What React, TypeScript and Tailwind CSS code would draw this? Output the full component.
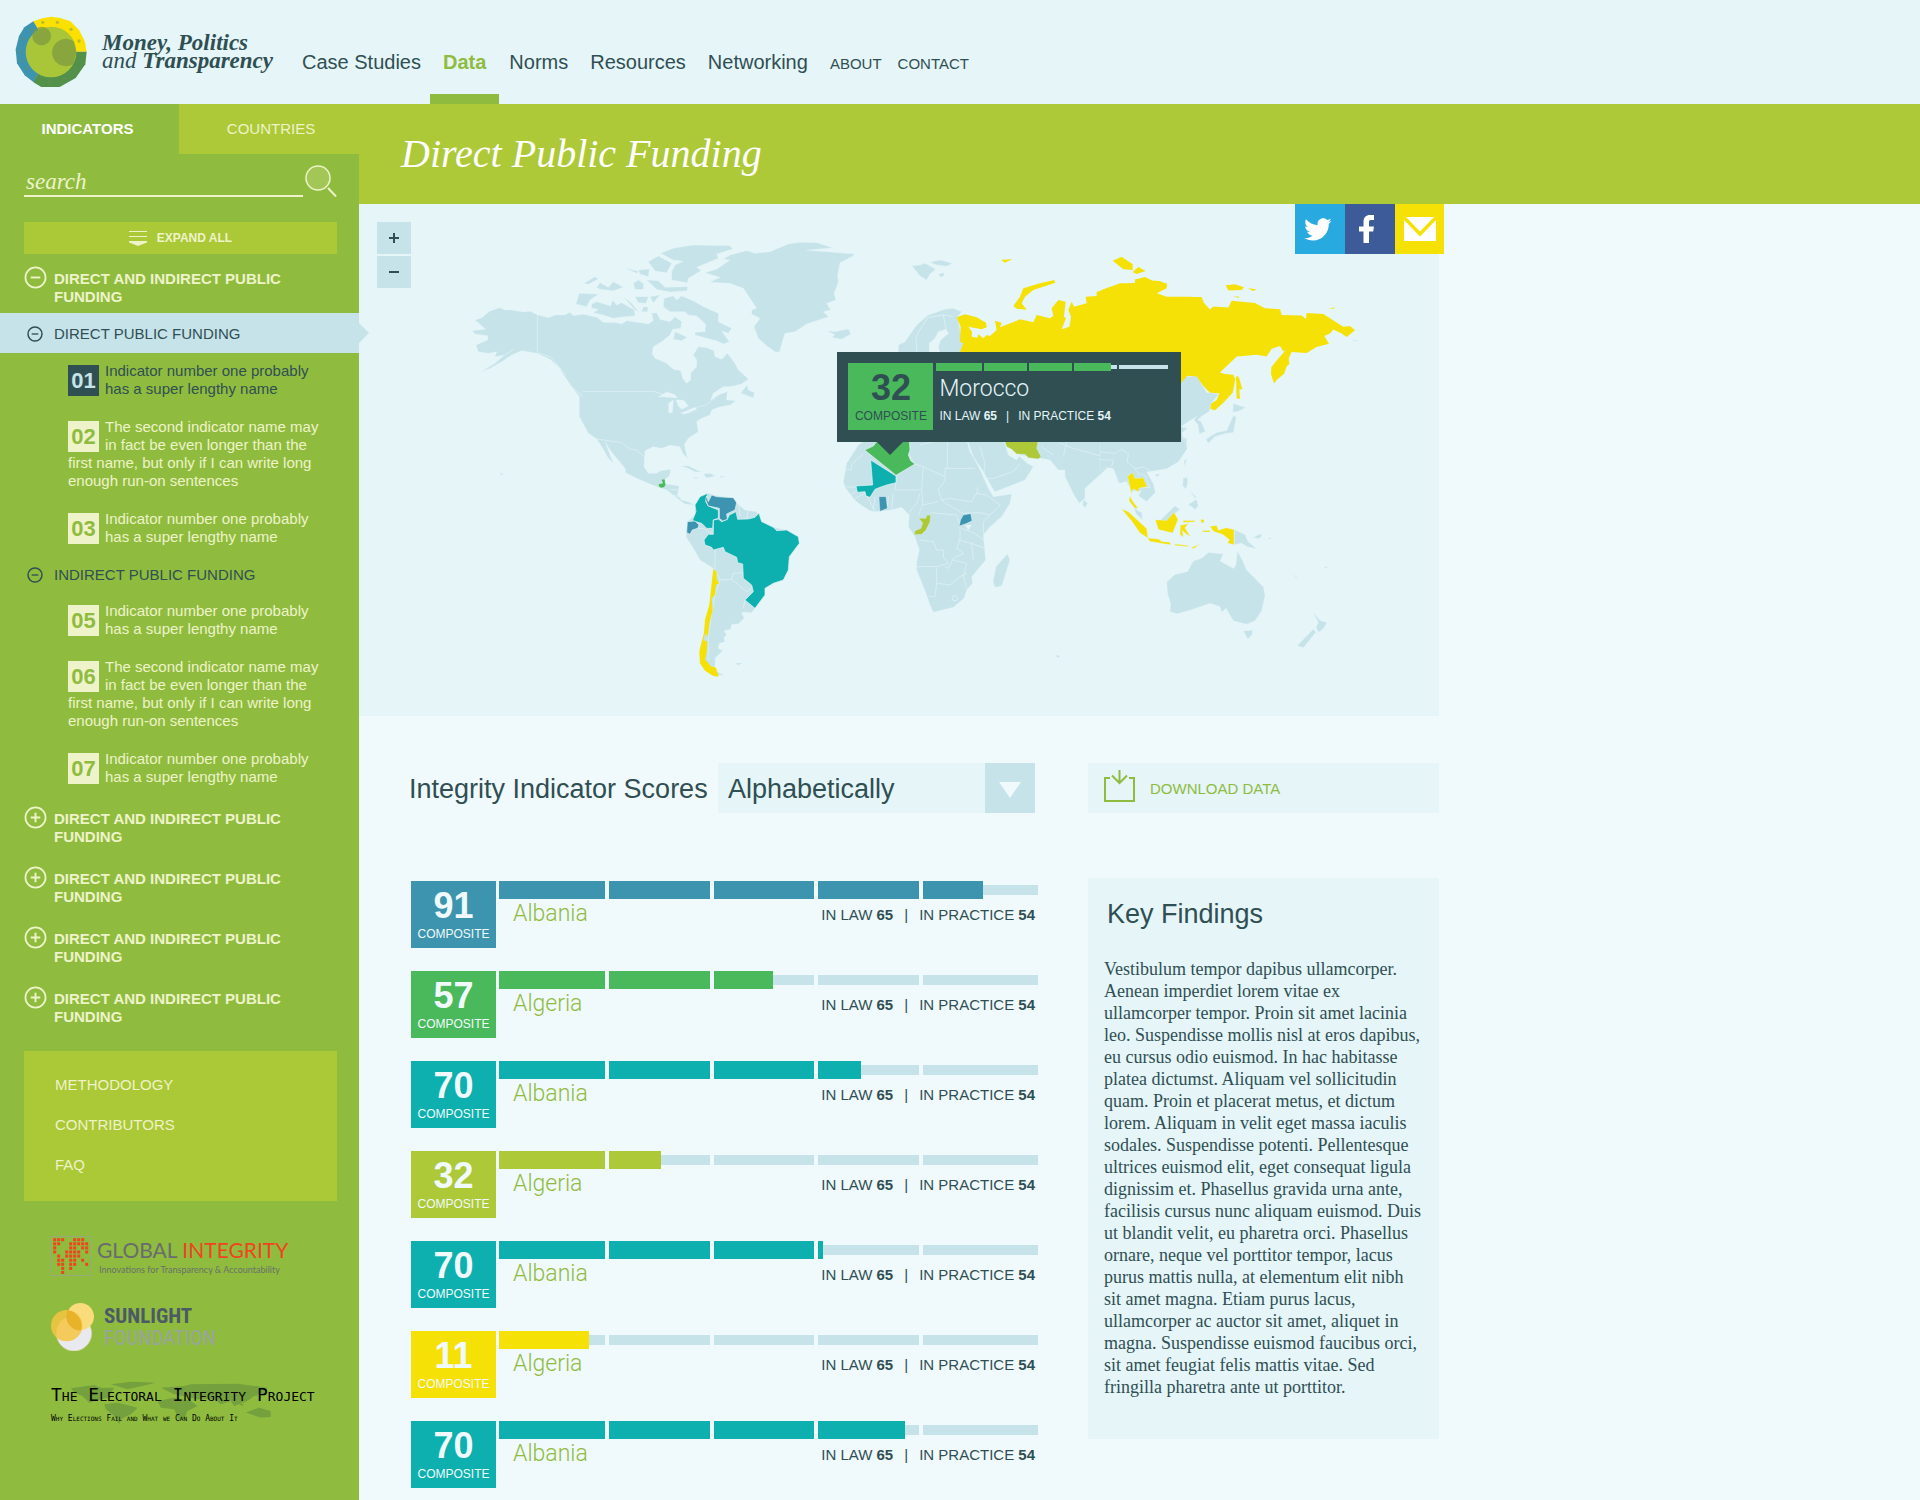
import { useState } from "react";

const SANS = "font-['Liberation_Sans',Arial,sans-serif]";
const SERIF = "font-['Liberation_Serif',Georgia,serif]";

const scores = [
  { score: 91, name: "Albania", fill: 484, color: "bg-[#3c94ae]" },
  { score: 57, name: "Algeria", fill: 274, color: "bg-[#4ab95b]" },
  { score: 70, name: "Albania", fill: 362, color: "bg-[#0db0ae]" },
  { score: 32, name: "Algeria", fill: 162, color: "bg-[#adc938]" },
  { score: 70, name: "Albania", fill: 324, color: "bg-[#0db0ae]" },
  { score: 11, name: "Algeria", fill: 90, color: "bg-[#f6e106]" },
  { score: 70, name: "Albania", fill: 406, color: "bg-[#0db0ae]" },
];

const barSegments = [
  { start: 0, size: 106 },
  { start: 110, size: 101 },
  { start: 215, size: 100 },
  { start: 319, size: 101 },
  { start: 424, size: 115 },
];

const tipSegments = [
  { start: 0, size: 46 },
  { start: 48, size: 43 },
  { start: 93, size: 43 },
  { start: 138, size: 43 },
  { start: 183, size: 49 },
];

const navLinks = ["Case Studies", "Data", "Norms", "Resources", "Networking"];

const shortName = "Indicator number one probably has a super lengthy name";
const longName =
  "The second indicator name may in fact be even longer than the first name, but only if I can write long enough run-on sentences";

const findings = [
  "Vestibulum tempor dapibus ullamcorper.",
  "Aenean imperdiet lorem vitae ex",
  "ullamcorper tempor. Proin sit amet lacinia",
  "leo. Suspendisse mollis nisl at eros dapibus,",
  "eu cursus odio euismod. In hac habitasse",
  "platea dictumst. Aliquam vel sollicitudin",
  "quam. Proin et placerat metus, et dictum",
  "lorem. Aliquam in velit eget massa iaculis",
  "sodales. Suspendisse potenti. Pellentesque",
  "ultrices euismod elit, eget consequat ligula",
  "dignissim et. Phasellus gravida urna ante,",
  "facilisis cursus nunc aliquam euismod. Duis",
  "ut blandit velit, eu pharetra orci. Phasellus",
  "ornare, neque vel porttitor tempor, lacus",
  "purus mattis nulla, at elementum elit nibh",
  "sit amet magna. Etiam purus lacus,",
  "ullamcorper ac auctor sit amet, aliquet in",
  "magna. Suspendisse euismod faucibus orci,",
  "sit amet feugiat felis mattis vitae. Sed",
  "fringilla pharetra ante ut porttitor.",
];

function Logo() {
  const dots = [
    [129, 69], [173, 69], [214, 90], [238, 125], [228, 209], [196, 236], [152, 247], [110, 233],
    [81, 208], [66, 183], [62, 157], [68, 118], [95, 90],
  ];
  return (
    <svg viewBox="46 50 216 216" className="size-[72px] shrink-0" aria-hidden="true">
      <path fill="#fce000" d="M101 66L128 57 155 52 182 56 212 66 238 92 255 125 261 157H155Z" />
      <path fill="#53914a" d="M261 157L257 195 228 236 180 263H125L100 248 155 157Z" />
      <path fill="#3c94b0" d="M101 248L75 228 52 192 48 150 58 110 74 84 101 66 155 157Z" />
      {dots.map(([x, y]) => (
        <circle key={`${x}-${y}`} cx={x} cy={y} r="5" fill="#6d8e5d" opacity=".45" />
      ))}
      <circle cx="154" cy="158" r="76" fill="#a8c638" />
      <circle cx="126" cy="110" r="28" fill="#7f9b40" opacity=".75" />
      <path fill="#7f9b40" opacity=".75" d="M222 126A41 41 0 1 0 222 193L230 157Z" />
    </svg>
  );
}

function Toggle({ open, small }: { open: boolean; small?: boolean }) {
  return (
    <svg viewBox="0 0 24 24" className={small ? "size-4" : "size-[23px]"} fill="none" stroke="currentColor" aria-hidden="true">
      <circle cx="12" cy="12" r="10.5" strokeWidth={small ? 2.2 : 1.8} />
      <path strokeWidth="2" d={open ? "M7 12H17" : "M7 12H17M12 7V17"} />
    </svg>
  );
}

function Category({ open = false }: { open?: boolean }) {
  return (
    <button type="button" aria-expanded={open} className="flex w-full gap-[7px] pr-8 pl-6 text-left text-[15px] leading-[18px] font-bold text-[#eef3c9]">
      <span className="-mt-1 shrink-0">
        <Toggle open={open} />
      </span>
      DIRECT AND INDIRECT PUBLIC FUNDING
    </button>
  );
}

function Indicators({ items, active }: { items: { id: string; name: string }[]; active?: string }) {
  return (
    <ul className="flex flex-col gap-5 pr-[34px] pl-[68px] text-[15px] leading-[18px]">
      {items.map((item) => (
        <li key={item.id} className={item.id === active ? "text-[#2f4f53]" : "text-[#eef3c9]"}>
          <a href={`#indicator-${item.id}`} className="block">
            <span
              className={`float-left mt-[3px] mr-[6px] flex h-[31px] w-[31px] items-center justify-center text-[22px] font-bold ${
                item.id === active ? "bg-[#2f4f53] text-[#c6e3e9]" : "bg-[#eef3c9] text-[#8fbc3f]"
              }`}
            >
              {item.id}
            </span>
            {item.name}
          </a>
        </li>
      ))}
    </ul>
  );
}

function GlobalIntegrity() {
  const rows = ["111..111.", "11..11111", "1...11.11", "1..1111.1", ".1.1111..", ".11.11.1.", ".11.11..1", "..1.1....", "..1......"];
  return (
    <a href="#global-integrity" className="flex items-start gap-[6px]">
      <svg viewBox="0 0 40 40" className="mt-[1px] size-10 shrink-0" aria-hidden="true">
        <rect x=".5" y=".5" width="39" height="39" fill="none" stroke="#9aa68a" strokeWidth=".8" />
        {rows.map((row, y) =>
          row.split("").map((c, x) =>
            c === "1" ? <rect key={`${x}-${y}`} x={2.2 + x * 4} y={2.2 + y * 4.1} width="3" height="3" fill="#f0431f" /> : null,
          ),
        )}
      </svg>
      <span className="font-['Lato',sans-serif]">
        <span className="block text-[21px] leading-[30px] whitespace-nowrap text-[#6a6b6e]">
          GLOBAL <span className="text-[#f0431f]">INTEGRITY</span>
        </span>
        <span className="block pl-0.5 text-[9px] leading-[10px] whitespace-nowrap text-[#6a7069]">
          Innovations for Transparency &amp; Accountability
        </span>
      </span>
    </a>
  );
}

function Sunlight() {
  return (
    <a href="#sunlight" className="flex items-center gap-[10px]">
      <svg viewBox="0 0 129 144" className="h-12 w-[43px] shrink-0" aria-hidden="true">
        <circle cx="69" cy="91" r="53" fill="#e9eaef" stroke="#d9cf9a" strokeWidth="2" />
        <circle cx="88" cy="41" r="41" fill="#fbdc7c" />
        <circle cx="47" cy="68" r="47" fill="#f7c443" opacity=".85" />
        <path fill="#dfa91c" opacity=".7" d="M48 28A41 41 0 0 0 90 82A47 47 0 0 0 48 22Z" />
      </svg>
      <span className="font-['Liberation_Sans_Narrow','Roboto_Condensed','Liberation_Sans',sans-serif] text-[21px] leading-[22px]">
        <span className="block font-bold text-[#4b5a66]">SUNLIGHT</span>
        <span className="block text-[#99a39d]">FOUNDATION</span>
      </span>
    </a>
  );
}

function ElectoralProject() {
  return (
    <a href="#electoral-integrity" className="relative block font-['DejaVu_Sans_Mono',monospace] whitespace-nowrap text-black [font-variant-caps:small-caps]">
      <svg viewBox="0 0 760 135" className="absolute top-0 left-0 w-[253px]" fill="#74a03d" aria-hidden="true">
        <path d="M60 22L130 12 150 20 190 20 170 50 130 60 115 65 95 45 70 35ZM180 10L240 2 315 5 260 18 230 25ZM160 70L200 65 260 80 240 100 210 115 205 130 190 105 165 85ZM330 20L400 15 420 10 560 8 650 20 640 40 610 45 590 60 550 75 540 60 510 70 490 55 440 55 370 40ZM320 60L370 50 420 60 440 75 410 90 400 115 385 118 370 85 330 80ZM585 95L625 80 660 90 660 108 630 110ZM560 65L580 70 575 75Z" />
      </svg>
      <span className="relative block text-[18px] leading-[28px]">The Electoral Integrity Project</span>
      <span className="relative block pt-1 text-[8px] leading-[12px]">Why Elections Fail and What we Can Do About It</span>
    </a>
  );
}

function Sidebar() {
  return (
    <aside className="flex w-[359px] shrink-0 flex-col bg-[#8fbc3f]">
      <div role="tablist" className="flex h-[50px] text-[15px]">
        <button type="button" role="tab" aria-selected="true" className="w-[179px] pr-1 font-bold text-white">
          INDICATORS
        </button>
        <button type="button" role="tab" aria-selected="false" className="flex-1 bg-[#adc938] pl-1 text-[#eef3c9]">
          COUNTRIES
        </button>
      </div>

      <form className="flex items-end gap-[2px] pt-[11px] pr-[22px] pl-6" onSubmit={(e) => e.preventDefault()}>
        <input
          type="text"
          aria-label="search"
          placeholder="search"
          className={`h-8 min-w-0 flex-1 border-b-2 border-[#eef3c9] pt-1 pl-[2px] ${SERIF} text-[23px] text-[#eef3c9] italic outline-none placeholder:text-[#eef3c9]`}
        />
        <button type="submit" aria-label="Search">
          <svg viewBox="0 0 32 32" className="size-8" fill="none" stroke="#eef3c9" aria-hidden="true">
            <circle cx="13" cy="13" r="12" strokeWidth="1.5" fill="#a2c757" />
            <path d="M23 23L31 31.500" strokeWidth="2" />
          </svg>
        </button>
      </form>

      <div className="pt-[25px] pr-[22px] pl-6">
        <button type="button" className="flex h-8 w-full items-center justify-center gap-[10px] bg-[#abc837] text-xs font-bold text-[#eef3c9]">
          <svg viewBox="0 0 18 15" className="h-[15px] w-[18px]" aria-hidden="true">
            <path stroke="#eef3c9" d="M0 .5H18M0 5.500H18" />
            <path fill="#eef3c9" d="M0 10H18V11.500L9 15 0 11.500Z" />
          </svg>
          EXPAND ALL
        </button>
      </div>

      <div className="pt-4">
        <Category open />
      </div>

      <div className="relative mt-[7px] flex h-10 items-center bg-[#c6e3e9] pt-[2px] pl-[27px] text-[15px] text-[#2f4f53]">
        <button type="button" aria-expanded="true" className="flex items-center gap-[11px]">
          <Toggle open small />
          DIRECT PUBLIC FUNDING
        </button>
        <svg viewBox="0 0 11 22" className="absolute top-[9px] -right-[10px] z-10 h-[22px] w-[11px]" fill="#c6e3e9" aria-hidden="true">
          <path d="M0 0L11 11 0 22Z" />
        </svg>
      </div>

      <div className="pt-[9px]">
        <Indicators
          active="01"
          items={[
            { id: "01", name: shortName },
            { id: "02", name: longName },
            { id: "03", name: shortName },
          ]}
        />
      </div>
      <button type="button" aria-expanded="true" className="mt-2 flex h-10 items-center gap-[11px] pt-[2px] pl-[27px] text-[15px] text-[#2f4f53]">
        <Toggle open small />
        INDIRECT PUBLIC FUNDING
      </button>
      <div className="pt-2">
        <Indicators
          items={[
            { id: "05", name: shortName },
            { id: "06", name: longName },
            { id: "07", name: shortName },
          ]}
        />
      </div>

      <div className="flex flex-col gap-6 pt-6">
        <Category />
        <Category />
        <Category />
        <Category />
      </div>

      <nav className="mt-[25px] mr-[22px] ml-6 flex h-[150px] flex-col bg-[#abc837] pt-[14px] pl-[31px] text-[15px] leading-[40px] text-[#eef3c9]">
        <a href="#methodology">METHODOLOGY</a>
        <a href="#contributors">CONTRIBUTORS</a>
        <a href="#faq">FAQ</a>
      </nav>

      <div className="flex flex-col pt-[34px] pb-16 pl-[51px]">
        <GlobalIntegrity />
        <div className="pt-[27px]">
          <Sunlight />
        </div>
        <div className="pt-[30px]">
          <ElectoralProject />
        </div>
      </div>
    </aside>
  );
}

function WorldMap() {
  return (
    <svg viewBox="359 204 1080 512" className="block w-full" role="img" aria-label="World map of composite scores">
      {/* Americas */}
      <g transform="translate(440 200) scale(.33333)" fill="#c6e3e9" stroke="#e5f5f8" strokeWidth="1" strokeLinejoin="round">
        <path d="M180 323L195 330 215 330 250 336 270 334 292 344 325 353 345 345 375 345 390 337 400 347 430 343 470 352 490 367 530 368 545 372 560 362 600 368 625 372 640 362 635 340 650 338 660 358 690 365 705 350 725 365 722 385 698 388 690 405 665 425 640 440 636 460 645 475 680 490 700 508 722 512 728 535 740 550 752 540 752 520 770 500 770 480 760 465 775 440 800 443 822 452 825 470 845 478 862 460 885 490 895 510 925 537 905 552 870 560 850 560 820 580 812 600 840 583 862 575 860 600 888 602 870 615 835 622 815 630 810 645 785 655 770 665 775 695 745 715 733 733 742 775 728 760 720 740 690 736 665 745 640 740 615 752 612 800 625 820 650 820 662 812 692 808 688 828 675 838 678 852 718 858 712 885 725 900 745 905 765 915 735 912 712 895 680 870 655 862 625 850 590 835 557 818 555 805 530 775 510 750 495 725 520 790 505 775 488 745 470 717 445 700 418 650 418 590 395 560 375 530 355 500 330 478 290 460 245 452 215 465 185 485 150 505 120 518 165 490 190 468 222 446 195 465 165 470 170 455 145 460 115 455 108 435 143 420 143 407 105 402 97 392 137 388 105 360 125 353 150 333Z" />
        <path d="M672 295L700 288 710 300 725 288 765 305 790 320 835 340 835 365 875 385 865 400 845 393 868 425 850 432 830 422 800 415 765 405 765 397 795 395 797 372 770 348 745 345 735 335 690 335 670 320ZM455 312L470 305 512 318 518 300 530 315 545 308 583 330 585 348 550 350 520 355 490 345 460 338 475 328 455 325ZM418 280L475 283 450 300 440 320 408 312ZM662 160L700 145 760 135 870 137 878 147 830 162 835 175 770 202 783 212 745 235 742 248 695 240 695 215 705 195 730 184 700 180ZM625 185L655 168 695 190 680 218 645 213ZM470 262L480 248 505 262 520 245 550 262 520 272 480 268ZM432 250L465 230 475 237 445 253ZM558 205L595 214 590 220ZM595 210L628 207 625 230 600 222ZM580 250L595 240 610 250 610 268 585 268ZM620 240L655 242 675 262 742 260 742 272 690 276 650 268ZM550 290L575 310 595 335 585 330ZM585 290L625 290 618 310 595 308ZM630 290L660 285 640 308ZM610 320L625 322 622 335 605 335ZM705 395L742 412 725 422 700 418Z" />
        <path d="M795 218L830 208 870 180 850 178 870 165 920 152 945 160 990 155 1045 132 1080 127 1130 128 1178 143 1100 151 1180 157 1243 162 1235 170 1200 188 1193 225 1195 245 1190 260 1182 280 1188 300 1160 310 1172 330 1150 335 1165 350 1100 372 1065 395 1035 400 1018 457 1005 455 980 437 955 415 942 380 960 355 935 342 935 330 950 325 930 295 910 265 870 250 810 247 840 232ZM1160 392L1185 395 1225 387 1233 402 1205 418 1175 412 1185 404ZM903 580L920 555 925 570 943 578 940 594 925 588ZM722 798L745 797 785 817 765 815 740 803ZM790 822L810 820 826 828 800 834ZM760 832h14v3h-14zM840 829h12v3h-12zM180 820h8v4h-8zM885 1390L908 1388 895 1396ZM825 1413L852 1424 835 1426Z" />
        <path d="M765 915L780 890 805 880 830 887 880 893 890 910 915 930 950 935 965 965 1000 982 1040 990 1075 1010 1078 1030 1048 1070 1045 1110 1030 1140 1000 1150 975 1165 975 1185 945 1225 935 1238 905 1237 912 1255 895 1272 875 1273 872 1288 852 1292 860 1305 852 1312 854 1326 838 1330 835 1345 848 1352 825 1375 825 1400 805 1405 785 1395 780 1345 800 1270 815 1170 820 1105 780 1080 760 1045 738 1010 742 965 765 945Z" />
        <g fill="#e5f5f8">
          <path d="M655 590L680 576 705 584 712 594 690 592ZM686 610L700 600 697 638 686 638ZM708 600L730 600 745 618 725 628 715 618ZM722 640L765 622 770 628 735 642Z" />
        </g>
        <path fill="none" strokeWidth="1.800" d="M292 344V458L330 470 352 495 378 525M428 574H640L665 582M745 640L770 622 800 614 828 592M390 556L430 590M470 717L545 728 570 748 590 750 612 770M825 1050V1105L840 1140 875 1138 880 1120 908 1118M875 1138L920 1175 940 1160M840 1140L825 1185 815 1240 805 1310 805 1380M897 915L900 950M925 930L920 955M915 1200L910 1225M755 985L790 985 820 1003M688 868L715 870M700 885L715 890" />
        <path fill="#4ab95b" d="M664 838H675V850L678 852 673 862 663 864 655 858 657 851 668 850Z" />
        <path fill="#0db0ae" strokeWidth="2" d="M765 915L780 890 803 880 797 905 805 918 835 930 835 955 820 960 818 985 800 985 785 970 757 962 768 935ZM820 960L835 957 845 965 862 958 868 945 888 935 893 958 925 957 945 952 957 940 965 965 1000 982 1010 992 1040 990 1075 1010 1078 1030 1048 1070 1045 1110 1030 1140 1000 1150 975 1165 975 1185 945 1225 915 1200 940 1175 935 1155 910 1135 908 1092 893 1088 890 1072 855 1055 850 1042 820 1050 815 1042 795 1035 792 1020 805 1003 820 1003Z" />
        <path fill="#3c94b0" strokeWidth="2" d="M800 888L805 905 815 885 830 890 880 893 890 908 885 930 860 942 862 958 848 963 838 955 838 925 805 918 797 900ZM742 965L765 963 777 975 773 985 757 990 750 1003 740 998Z" />
        <path fill="#f6e106" stroke="none" d="M820 1107L830 1115 830 1140 838 1148 828 1155 825 1185 815 1195 818 1230 808 1270 803 1310 796 1300 790 1320 802 1325 800 1360 795 1378 812 1398 828 1403 836 1430 820 1428 795 1412 780 1390 778 1355 785 1325 792 1300 795 1260 808 1215 815 1150Z" />
      </g>
      {/* Europe, Africa and western Asia */}
      <g transform="translate(820 200) scale(.33333)" fill="#c6e3e9" stroke="#e5f5f8" strokeWidth="1" strokeLinejoin="round">
        <path d="M276 197L300 195 315 190 347 208 330 222 320 240 300 228ZM330 187L360 180 397 190 380 199 350 195ZM356 222L370 218 374 226 362 232Z" />
        <path d="M235 460V435L255 425 290 375 325 345 375 328 400 325 425 335 412 350 422 400 445 460Z" />
        <path fill="#e5f5f8" d="M328 460L328 430 345 415 355 395 378 388 386 400 362 420 355 440 360 460Z" />
        <path fill="none" strokeWidth="2" d="M290 456L288 410 305 380 325 352 370 345 378 388M370 345L400 350" />
        <path d="M135 720H440L450 755 470 790 485 820 505 865 520 890 575 882 570 910 545 950 510 980 490 1005 497 1080 455 1130 458 1150 440 1170 432 1195 400 1222 340 1237 330 1215 318 1180 290 1110 290 1085 298 1050 285 1010 265 980 268 945 245 922 215 930 165 935 150 932 115 910 100 895 75 862 70 845 80 790 115 735Z" />
        <path d="M440 715H1100L1100 745 1070 785 1020 805 980 808 980 820 1000 850 1005 875 980 903 960 882 965 870 935 872 920 845 895 848 880 800 860 805 850 815 795 865 795 895 778 910 762 885 735 830 735 810 715 810 690 780 663 775 600 765 585 750 553 725 565 765 590 780 598 768 620 788 640 800 615 840 525 875 515 860 490 815 460 770ZM790 898L803 910 795 924 788 915ZM562 1062L570 1080 545 1158 525 1162 519 1145 528 1100ZM706 1365L722 1368 712 1373Z" />
        <path fill="none" strokeWidth="1.800" d="M75 808H95V792L115 775 130 762M268 765L283 792 310 800 375 830M382 725V805H465M300 735L340 725M382 805H375V840L355 870 365 900 385 915 430 940 480 938 510 945M310 800L305 870 225 870M220 880L215 930M228 845L225 870M300 880L290 910 265 940M305 870L308 915 295 945M308 915L355 905M365 900L388 895 455 905 470 880 475 860M470 880L500 885 540 915 510 945 490 965M490 965V1000M332 938L410 945 420 978V1020L410 1045 430 1060M298 1020L340 1025 350 1050 370 1050V1072L385 1090 350 1100 292 1100M415 1020L455 1030 460 1080M425 985L465 1000 490 1020M430 1060L400 1075 385 1105 375 1100M350 1105V1150L345 1190 325 1190M350 1150L390 1155 420 1130 440 1120M400 1080L440 1090 430 1130 440 1165M455 1030L495 1045M205 890L202 925M135 880L150 905 165 935M105 895L135 880 145 890M165 890L160 930M75 860L110 862M110 875L90 885M480 740L495 790M495 790L490 835 520 835 580 815 600 790M665 740L700 765M740 725L730 770M720 730L760 745 850 770M850 770L890 760 885 800M890 760L905 745M905 800L950 800 985 870M945 830L975 810M960 870L985 865" />
        <circle cx="405" cy="1195" r="8" fill="none" strokeWidth="2" />
        <path fill="#e5f5f8" stroke="none" d="M435 975L455 975 445 990Z" />
        <path fill="#4ab95b" strokeWidth="2" d="M134 750L160 738 175 718H268L270 750 265 765 272 782 285 792 228 826 215 815Z" />
        <path fill="#0db0ae" strokeWidth="2" d="M152 780L228 828 228 848 200 855 180 862 165 868 150 892 138 888 135 875 112 877 108 858 158 855Z" />
        <path fill="#3c94b0" d="M177 890H198L202 925 180 934ZM430 945L452 941 456 962 440 970 418 978 422 960Z" />
        <path fill="#adc938" d="M296 955L318 955 320 946 332 945 330 965 318 990 305 1003 283 1004 285 992 303 985 308 968ZM553 720H655L650 745 663 770 655 777 625 773 615 763 590 762 575 748 560 740Z" />
        <path fill="#f6e106" stroke="none" d="M410 352L435 343 470 352 498 368 500 382 485 388 445 380 456 395 455 410 472 413 475 403 490 415 500 405 510 408 530 390 525 362 545 368 540 382 600 358 640 367 650 345 690 355 700 348 695 325 715 300 737 305 732 350 738 355 725 388 748 380 753 350 745 330 755 305 762 320 800 310 797 290 840 287 845 270 900 250 945 250 975 232 1000 243 1040 250 1040 265 1010 280 1040 290 1115 290V480H410L430 430 420 425 422 380ZM580 318L600 290 610 265 660 250 703 240 706 248 640 270 615 290 605 310 620 329 590 326ZM543 180L577 177 555 188Z" />
      </g>
      {/* Eastern Asia and Oceania */}
      <g transform="translate(1100 200) scale(.33333 .33801)" fill="#c6e3e9" stroke="#e5f5f8" strokeWidth="1" strokeLinejoin="round">
        <path d="M235 525L290 520 320 570 357 573 333 603 328 625 305 640 293 650 303 655 316 685 298 692 294 665 282 650 290 640 243 670 262 675 245 690 262 735 235 775 200 795 170 800 140 805 160 840 166 865 140 892 115 875 125 860 95 860 85 830 60 838 40 795 20 790 0 800V690H235Z" />
        <path fill="none" strokeWidth="1.800" d="M0 745L45 750 65 737 85 750 82 775 105 795 130 790 150 800M0 768L40 770 35 790M105 795L115 810 135 815 150 850M120 852L150 850" />
        <path d="M400 602L418 608 437 614 415 625 398 628ZM400 638L409 642 400 688 380 690 345 700 325 720 318 708 350 688 380 682ZM252 772L261 766 254 788ZM165 812L180 810 172 820ZM250 822L262 822 263 838 258 855 248 845ZM265 900L290 886 295 905 285 915ZM268 858L290 880 285 882ZM103 912L125 925 128 947 108 928ZM180 948L225 905 240 915 215 935 200 952ZM403 975L435 990 445 1012 470 1032 440 1025 425 1015 403 1020ZM460 998L482 988 486 994 475 1002ZM200 1130L225 1108 262 1100 280 1068 305 1060 325 1043 370 1047 360 1068 400 1090 408 1080 412 1038 427 1065 440 1095 490 1145 495 1170 485 1215 465 1245 440 1255 400 1245 378 1208 365 1220 360 1203 330 1193 275 1212 232 1224 210 1218 212 1195 203 1165ZM430 1275L458 1273 455 1288 443 1299ZM640 1220L660 1244 681 1250 670 1268 656 1279 648 1265 655 1250ZM640 1270L648 1278 610 1325 592 1318ZM577 1107L597 1120 590 1118ZM670 1087L683 1084 680 1090ZM755 413L775 416 765 418ZM505 1000h8v3h-8z" />
        <path fill="#f6e106" stroke="none" d="M-10 272L30 258 60 250 105 245 105 235 135 228 145 238 180 240 202 252 195 262 168 276 200 288 270 293 275 287 305 287 312 305 330 324 340 315 385 318 395 298 465 305 495 320 540 323 545 340 605 342 618 352 620 334 670 337 730 375 750 373 765 385 740 405 725 395 700 383 690 395 673 402 687 425 650 435 620 453 575 450 566 468 568 485 560 492 552 515 532 530 522 543 513 515 514 495 530 475 575 424 580 430 550 448 540 432 515 440 500 463 470 458 410 463 360 510 375 515 400 517 406 530 398 570 370 600 345 622 331 618 333 603 350 592 358 572 330 570 310 550 290 522 262 520 243 542V480H-10ZM408 522L416 522 427 560 418 560 420 588 410 587ZM38 180L65 168 98 190 98 207 70 205ZM98 213L115 198 137 210 110 219ZM377 252L405 249 432 258 425 266 385 268ZM443 260L470 265 460 269ZM400 285L418 286 415 290ZM685 320L707 318 700 322Z" />
        <path fill="#f6e106" d="M83 818L98 806 105 824 130 822 141 848 118 852 115 864 103 855 97 858 95 870 90 850ZM90 875L97 890 114 912 105 912 87 890ZM65 914L85 922 140 972 144 1000 120 985 95 950ZM143 1000L175 1003 185 1010 212 1013 210 1020 150 1010ZM166 946L200 948 222 924 234 945 218 985 175 975ZM241 962L265 958 255 970 272 997 255 985 247 978 250 997 240 990ZM250 948L285 948 285 952 250 954ZM302 945H312V955H304ZM330 965L350 963 355 977 378 970 402 975V1020L383 1015 388 1005 370 990 340 980ZM225 1018L265 1022 265 1025 225 1022ZM275 1028L300 1018 280 1032ZM308 978L330 978 330 982H308Z" />
      </g>
    </svg>
  );
}

function SegmentBar({
  segments,
  fill,
  color,
  thick,
  thin,
  gap,
}: {
  segments: { start: number; size: number }[];
  fill: number;
  color: string;
  thick: string;
  thin: string;
  gap: string;
}) {
  return (
    <div className={`flex ${thick} ${gap}`}>
      {segments.map((s) => {
        const part = Math.max(0, Math.min(1, (fill - s.start) / s.size));
        return (
          <div key={s.start} className="flex min-w-0 basis-0 items-center" style={{ flexGrow: s.size }}>
            <div className={`h-full ${color}`} style={{ width: `${part * 100}%` }} />
            <div className={`flex-1 bg-[#c6e3e9] ${thin}`} />
          </div>
        );
      })}
    </div>
  );
}

function Breakdown() {
  return (
    <>
      <span>
        IN LAW <b>65</b>
      </span>
      <span>|</span>
      <span>
        IN PRACTICE <b>54</b>
      </span>
    </>
  );
}

function MapTooltip() {
  return (
    <div role="tooltip" className="absolute top-[29%] left-[44.3%] flex h-[90px] w-[344px] gap-[3px] bg-[#2f4f53] p-[11px] pr-[13px] text-[#e5f5f8]">
      <div className="flex h-[67px] w-[85px] shrink-0 flex-col items-center bg-[#4ab95b] pt-[7px] text-[#2f4f53]">
        <span className="text-[36px] leading-9 font-bold">32</span>
        <span className="pt-[2px] text-xs">COMPOSITE</span>
      </div>
      <div className="min-w-0 flex-1">
        <SegmentBar segments={tipSegments} fill={175} color="bg-[#4ab95b]" thick="h-2" thin="h-1" gap="gap-[2px]" />
        <div className="pt-1 pl-[3px] font-['Roboto',sans-serif] text-[23px] leading-[28px] font-light">Morocco</div>
        <div className="flex gap-[9px] pt-[5px] pl-[3px] text-xs leading-4">
          <Breakdown />
        </div>
      </div>
      <svg viewBox="0 0 26 13" className="absolute top-full left-[40px] h-[13px] w-[26px]" fill="#2f4f53" aria-hidden="true">
        <path d="M0 0H26L13 13Z" />
      </svg>
    </div>
  );
}

function MapPanel() {
  return (
    <section className="relative w-full max-w-[1080px] bg-[#e5f5f8]">
      <WorldMap />
      <div className="absolute top-[18px] left-[18px] flex flex-col gap-[2px] text-[#2f4f53]">
        <button type="button" aria-label="Zoom in" className="flex h-8 w-[34px] items-center justify-center bg-[#c6e3e9]">
          <svg viewBox="0 0 10 10" className="size-[10px]" stroke="currentColor" strokeWidth="2" aria-hidden="true">
            <path d="M0 5H10M5 0V10" />
          </svg>
        </button>
        <button type="button" aria-label="Zoom out" className="flex h-8 w-[34px] items-center justify-center bg-[#c6e3e9]">
          <svg viewBox="0 0 10 10" className="size-[10px]" stroke="currentColor" strokeWidth="2" aria-hidden="true">
            <path d="M0 5H10" />
          </svg>
        </button>
      </div>
      <div className="absolute top-0 -right-[5px] flex h-[50px]">
        <a href="#twitter" aria-label="Twitter" className="flex w-[50px] items-center bg-[#28aae1] pl-2">
          <svg viewBox="0 0 24 24" className="size-[29px]" fill="#fff" aria-hidden="true">
            <path d="M23.643 4.937c-.835.37-1.732.62-2.675.733.962-.576 1.700-1.490 2.048-2.578-.9.534-1.897.922-2.958 1.130-.85-.904-2.060-1.470-3.400-1.470-2.572 0-4.658 2.086-4.658 4.660 0 .364.042.718.120 1.060-3.873-.195-7.304-2.050-9.602-4.868-.4.690-.63 1.490-.63 2.342 0 1.616.823 3.043 2.072 3.878-.764-.025-1.482-.234-2.110-.583v.06c0 2.257 1.605 4.140 3.737 4.568-.392.106-.803.162-1.227.162-.3 0-.593-.028-.877-.082.593 1.850 2.313 3.198 4.352 3.234-1.595 1.250-3.604 1.995-5.786 1.995-.376 0-.747-.022-1.112-.065 2.062 1.323 4.510 2.093 7.140 2.093 8.570 0 13.255-7.098 13.255-13.254 0-.2-.005-.402-.014-.602.91-.658 1.700-1.477 2.323-2.410z" />
          </svg>
        </a>
        <a href="#facebook" aria-label="Facebook" className="flex w-[50px] items-center bg-[#3d5a99] pl-[14px]">
          <svg viewBox="0 0 15 28" className="h-7 w-[15px]" fill="#fff" aria-hidden="true">
            <path d="M4.500 28V16.500H0V11.500H4.500V7C4.500 2.500 7 0 11 0H15V5H12C10.500 5 10 5.700 10 7V11.500H15L14.200 16.500H10V28Z" />
          </svg>
        </a>
        <a href="#email" aria-label="Email" className="flex w-[49px] items-center justify-center bg-[#f6e106]">
          <svg viewBox="0 0 32 24" className="h-6 w-8" aria-hidden="true">
            <path fill="#fff" d="M0 3L16 19.500 32 3V24H0ZM2 0H30L16 14.500Z" />
          </svg>
        </a>
      </div>
      <MapTooltip />
    </section>
  );
}

function ScoreRow({ score, name, fill, color }: (typeof scores)[number]) {
  return (
    <li className="flex gap-[3px]">
      <div className={`flex h-[67px] w-[85px] shrink-0 flex-col items-center pt-[7px] text-[#f0f9fc] ${color}`}>
        <span className="text-[36px] leading-9 font-bold">{score}</span>
        <span className="pt-[2px] text-xs">COMPOSITE</span>
      </div>
      <div className="min-w-0 flex-1">
        <SegmentBar segments={barSegments} fill={fill} color={color} thick="h-[18px]" thin="h-[10px]" gap="gap-1" />
        <div className="flex items-center justify-between pr-[3px] pl-[14px]">
          <span className="font-['Roboto',sans-serif] text-[23px] leading-[30px] font-light text-[#8fbc3f]">{name}</span>
          <span className="flex gap-[11px] pt-[2px] text-[15px] text-[#2f4f53]">
            <Breakdown />
          </span>
        </div>
      </div>
    </li>
  );
}

function Scores() {
  const [order, setOrder] = useState("alpha");
  return (
    <section className="flex w-full max-w-[1080px] gap-[50px] pt-[47px] pb-3 pl-[50px]">
      <div className="min-w-0 flex-1">
        <div className="flex items-center justify-between pr-[3px]">
          <label htmlFor="order" className="pt-[2px] text-[27px] whitespace-nowrap text-[#2f4f53]">
            Integrity Indicator Scores
          </label>
          <div className="relative w-[317px]">
            <select
              id="order"
              value={order}
              onChange={(e) => setOrder(e.target.value)}
              className="h-[50px] w-full appearance-none bg-[#e5f5f8] pt-[2px] pl-[10px] text-[27px] text-[#2f4f53] outline-none"
            >
              <option value="alpha">Alphabetically</option>
              <option value="score">By score</option>
            </select>
            <span className="pointer-events-none absolute top-0 right-0 flex h-full w-[50px] items-center justify-center bg-[#c6e3e9]">
              <svg viewBox="0 0 22 16" className="mt-1 h-4 w-[22px]" fill="#f0f9fc" aria-hidden="true">
                <path d="M0 0H22L11 16Z" />
              </svg>
            </span>
          </div>
        </div>
        <ul className="flex flex-col gap-[23px] pt-[68px] pl-[2px]">
          {scores.map((row, i) => (
            <ScoreRow key={i} {...row} />
          ))}
        </ul>
      </div>

      <div className="w-[351px] shrink-0">
        <a href="#download" className="flex h-[50px] items-center gap-[15px] bg-[#e5f5f8] pl-4 text-[15px] text-[#8fbc3f]">
          <svg viewBox="0 0 31 32" className="-mt-1 h-8 w-[31px]" fill="none" stroke="currentColor" strokeWidth="2" aria-hidden="true">
            <path d="M6 8H1V31H30V8H25" />
            <path d="M15.500 0V13M8 5.500L15.500 13 23 5.500" />
          </svg>
          <span className="pt-[2px]">DOWNLOAD DATA</span>
        </a>
        <article className="mt-[65px] bg-[#e5f5f8] px-4 pt-5 pb-[41px] text-[#2f4f53]">
          <h2 className="pl-[3px] text-[27px] leading-8">Key Findings</h2>
          <p className={`pt-7 ${SERIF} text-[18px] leading-[22px]`}>
            {findings.map((line) => (
              <span key={line} className="block whitespace-nowrap">
                {line}
              </span>
            ))}
          </p>
        </article>
      </div>
    </section>
  );
}

export default function App() {
  return (
    <div className={`flex min-h-screen flex-col bg-[#f0f9fc] ${SANS}`}>
      <header className="flex h-[104px] bg-[#e5f5f8] pl-[15px] text-[#2f4f53]">
        <a href="#home" className={`flex items-center gap-[15px] ${SERIF} text-[23px] leading-[18px] italic`}>
          <Logo />
          <span className="w-[177px] whitespace-nowrap">
            <b className="block">Money, Politics</b>
            <span className="block">
              and <b>Transparency</b>
            </span>
          </span>
        </a>
        <nav className="ml-[10px] flex text-[20px]">
          {navLinks.map((link) => (
            <a
              key={link}
              href={`#${link.toLowerCase().replace(" ", "-")}`}
              className={`flex border-b-[10px] pt-[50px] leading-6 ${
                link === "Data"
                  ? "border-[#8fbc3f] px-[13px] font-bold text-[#8fbc3f]"
                  : link === "Case Studies"
                    ? "border-transparent pr-[9px] pl-[13px]"
                    : "border-transparent pr-3 pl-[10px]"
              }`}
            >
              {link}
            </a>
          ))}
          <a href="#about" className="pt-[52px] pl-[10px] text-[15px] leading-6">
            ABOUT
          </a>
          <a href="#contact" className="pt-[52px] pl-4 text-[15px] leading-6">
            CONTACT
          </a>
        </nav>
      </header>
      <div className="flex flex-1">
        <Sidebar />
        <main className="min-w-0 flex-1">
          <h1 className={`flex h-[100px] items-center bg-[#adc938] pl-[42px] ${SERIF} text-[40px] text-white italic`}>
            Direct Public Funding
          </h1>
          <MapPanel />
          <Scores />
        </main>
      </div>
    </div>
  );
}
